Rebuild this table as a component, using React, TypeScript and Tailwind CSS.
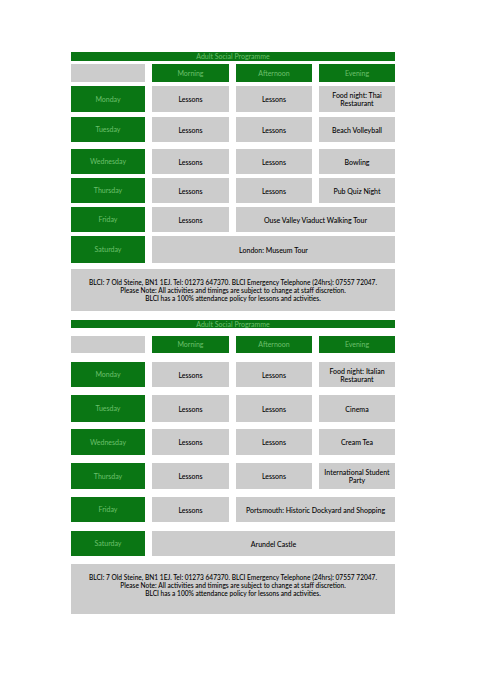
const font = { fontFamily: 'Lato, "Open Sans", "Liberation Sans", sans-serif' };

type Row = {
  day: string;
  cells: string[];
  span?: 'friday' | 'saturday';
  cls: string;
};

type Table = {
  top: string;
  head: string;
  rows: Row[];
  footer: string;
};

const tables: Table[] = [
  {
    top: 'mt-[52px] h-[9px]',
    head: 'mt-[3px] h-[18px]',
    rows: [
      { day: 'Monday', cells: ['Lessons', 'Lessons', 'Food night: Thai Restaurant'], cls: 'mt-[4px] h-[26px]' },
      { day: 'Tuesday', cells: ['Lessons', 'Lessons', 'Beach Volleyball'], cls: 'mt-[5px] h-[25px]' },
      { day: 'Wednesday', cells: ['Lessons', 'Lessons', 'Bowling'], cls: 'mt-[7px] h-[25px]' },
      { day: 'Thursday', cells: ['Lessons', 'Lessons', 'Pub Quiz Night'], cls: 'mt-[4px] h-[25px]' },
      { day: 'Friday', cells: ['Lessons', 'Ouse Valley Viaduct Walking Tour'], span: 'friday', cls: 'mt-[4px] h-[25px]' },
      { day: 'Saturday', cells: ['London: Museum Tour'], span: 'saturday', cls: 'mt-[4px] h-[27px]' },
    ],
    footer: 'mt-[6px] h-[42px] pt-[9px]',
  },
  {
    top: 'mt-[9px] h-[8px]',
    head: 'mt-[8px] h-[17px]',
    rows: [
      { day: 'Monday', cells: ['Lessons', 'Lessons', 'Food night: Italian Restaurant'], cls: 'mt-[9px] h-[25px]' },
      { day: 'Tuesday', cells: ['Lessons', 'Lessons', 'Cinema'], cls: 'mt-[8px] h-[27px]' },
      { day: 'Wednesday', cells: ['Lessons', 'Lessons', 'Cream Tea'], cls: 'mt-[7px] h-[26px]' },
      { day: 'Thursday', cells: ['Lessons', 'Lessons', 'International Student Party'], cls: 'mt-[8px] h-[26px]' },
      { day: 'Friday', cells: ['Lessons', 'Portsmouth: Historic Dockyard and Shopping'], span: 'friday', cls: 'mt-[8px] h-[25px]' },
      { day: 'Saturday', cells: ['Arundel Castle'], span: 'saturday', cls: 'mt-[9px] h-[25px]' },
    ],
    footer: 'mt-[8px] h-[50px] pt-[9px]',
  },
];

function Green({ children, className = '' }: { children?: React.ReactNode; className?: string }) {
  return (
    <div className={`bg-[#0a7614] text-[#6cc06c] flex items-center justify-center text-center text-[7px] ${className}`}>
      {children}
    </div>
  );
}

function Grey({ children, className = '' }: { children?: React.ReactNode; className?: string }) {
  return (
    <div className={`bg-[#cccccc] text-black font-medium flex items-center justify-center text-center text-[7px] leading-[8px] px-[3px] ${className}`}>
      {children}
    </div>
  );
}

function Programme({ t }: { t: Table }) {
  return (
    <div className="flex flex-col">
      <Green className={t.top}>Adult Social Programme</Green>
      <div className={`grid grid-cols-[74px_77px_76px_76px] gap-x-[7px] ${t.head}`}>
        <div className="bg-[#cccccc]" />
        <Green>Morning</Green>
        <Green>Afternoon</Green>
        <Green>Evening</Green>
      </div>
      {t.rows.map((r) => (
        <div key={r.day} className={`grid grid-cols-[74px_77px_76px_76px] gap-x-[7px] ${r.cls}`}>
          <Green>{r.day}</Green>
          {r.span === 'saturday' ? (
            <Grey className="col-span-3">{r.cells[0]}</Grey>
          ) : r.span === 'friday' ? (
            <>
              <Grey>{r.cells[0]}</Grey>
              <Grey className="col-span-2">{r.cells[1]}</Grey>
            </>
          ) : (
            r.cells.map((c, i) => <Grey key={i}>{c}</Grey>)
          )}
        </div>
      ))}
      <div className={`bg-[#cccccc] text-black font-medium text-center text-[6.6px] leading-[8px] ${t.footer}`}>
        <div>BLCI: 7 Old Steine, BN1 1EJ. Tel: 01273 647370. BLCI Emergency Telephone (24hrs): 07557 72047.</div>
        <div>Please Note: All activities and timings are subject to change at staff discretion.</div>
        <div>BLCI has a 100% attendance policy for lessons and activities.</div>
      </div>
    </div>
  );
}

export default function App() {
  return (
    <div className="w-[481px] h-[680px] bg-white" style={font}>
      <div className="ml-[71px] w-[324px] flex flex-col">
        {tables.map((t, i) => (
          <Programme key={i} t={t} />
        ))}
      </div>
    </div>
  );
}
